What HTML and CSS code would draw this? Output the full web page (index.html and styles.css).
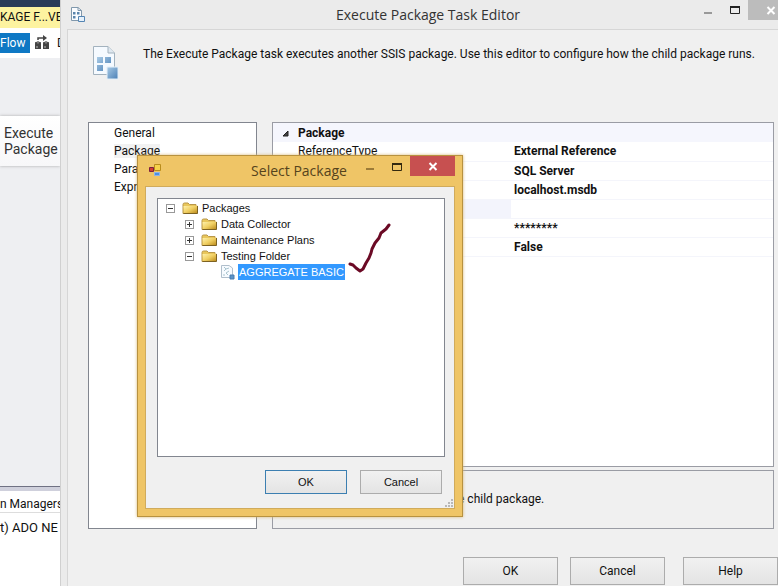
FILE: index.html
```html
<!DOCTYPE html>
<html lang="en">
<head>
    <meta charset="UTF-8">
    <meta name="viewport" content="width=device-width, initial-scale=1.0">
    <title>Execute Package Task Editor</title>
    <link rel="stylesheet" href="styles.css">
</head>
<body>
    <svg class="defs" width="0" height="0" aria-hidden="true">
        <defs>
            <linearGradient id="folderFill" x1="0" y1="0" x2="1" y2="1">
                <stop offset="0" stop-color="#fff3b0"/>
                <stop offset="0.5" stop-color="#f0cf62"/>
                <stop offset="1" stop-color="#b88718"/>
            </linearGradient>
            <linearGradient id="blueFill" x1="0" y1="0" x2="1" y2="1">
                <stop offset="0" stop-color="#a9cbe6"/>
                <stop offset="1" stop-color="#4a7fb5"/>
            </linearGradient>
        </defs>
        <symbol id="folder" viewBox="0 0 16 14">
            <path d="M1 3.500 Q1 2 2.500 2 H6 L7.500 3.500 H14 V12.500 H1 Z" fill="#e9c75c" stroke="#b99748"/>
            <path d="M1.500 5 H12 L15.500 4.500 V12.500 H2 Z" fill="url(#folderFill)"/>
            <path d="M1.500 12.500 H15.500 V5" fill="none" stroke="#7d6222"/>
        </symbol>
    </svg>

    <div class="ide">
        <div class="ide-top"></div>
        <div class="ide-tab">KAGE F...VE</div>
        <div class="ide-toolbar">
            <button class="flow">Flow</button>
            <svg width="16" height="16" viewBox="0 0 16 16" aria-hidden="true">
                <path d="M4 5 V3 H10" fill="none" stroke="#444" stroke-width="1.500"/>
                <path d="M9 0 L13 3 L9 6 Z" fill="#444"/>
                <path d="M1 8 H7 V14 H1 Z M9 8 H15 V14 H9 Z" fill="#444"/>
                <path d="M1 8 Q4 5.500 7 8 Q4 10 1 8 M9 8 Q12 5.500 15 8 Q12 10 9 8" fill="#aaa" stroke="#444"/>
                <path d="M3 11 V13 M11 11 V13" stroke="#bbb"/>
            </svg>
            <span class="next-tab">D</span>
        </div>
        <div class="ide-canvas">
            <div class="task">Execute<br>Package</div>
        </div>
        <div class="managers-title">n Managers</div>
        <div class="managers">t) ADO NE</div>
    </div>

    <div class="editor">
        <div class="titlebar">
            <svg class="app-icon" width="16" height="16" viewBox="0 0 16 16" aria-hidden="true">
                <path d="M1.500 1.500 H8 L11.500 4.500 V14.500 H1.500 Z" fill="#fafcff" stroke="#8098ac"/>
                <path d="M8 1.500 V4.500 H11.500" fill="none" stroke="#8098ac"/>
                <path d="M3 6 H5.500 V8.500 H3 Z M7 6 H9.500 V8.500 H7 Z M3 10 H5.500 V12.500 H3 Z" fill="#5b86ad"/>
                <path d="M8.500 10.500 H14.500 V15.500 H8.500 Z" fill="#e6f1fb" stroke="#5585b3"/>
            </svg>
            <h1>Execute Package Task Editor</h1>
            <div class="window-buttons">
                <button class="minimize" aria-label="Minimize"><svg width="10" height="20"><path d="M1 13 H9" stroke="#999" stroke-width="2"/></svg></button>
                <button class="maximize" aria-label="Maximize"><svg width="10" height="20"><path d="M0.500 6 V13.500 H9.500 V6" fill="none" stroke="#222"/><path d="M0 7 H10" stroke="#222" stroke-width="2"/></svg></button>
                <button class="close" aria-label="Close"><svg width="10" height="20"><path d="M1.500 7 L8.500 14 M8.500 7 L1.500 14" stroke="#fff" stroke-width="2"/></svg></button>
            </div>
        </div>
        <div class="client">
            <div class="intro">
                <svg width="28" height="36" viewBox="0 0 28 36" aria-hidden="true">
                    <path d="M1.500 1.500 H16 L22.500 8 V29.500 H1.500 Z" fill="#f5faff" stroke="#a3b2be"/>
                    <path d="M16 1.500 V8 H22.500" fill="#dfe8f0" stroke="#a3b2be"/>
                    <path d="M5 12 H11 V18 H5 Z M13 12 H19 V18 H13 Z M5 20 H11 V26 H5 Z" fill="url(#blueFill)"/>
                    <path d="M15 22 H26 V34 H15 Z" fill="url(#blueFill)" stroke="#e3eff9"/>
                </svg>
                <p>The Execute Package task executes another SSIS package. Use this editor to configure how the child package runs.</p>
            </div>
            <div class="panels">
                <ul class="pages">
                    <li>General</li>
                    <li><span class="current">Package</span></li>
                    <li>Parameters</li>
                    <li>Expressions</li>
                </ul>
                <div class="details">
                    <div class="property-grid">
                        <table>
                            <colgroup>
                                <col class="names">
                                <col>
                            </colgroup>
                            <thead>
                                <tr>
                                    <th colspan="2"><svg width="7" height="7" aria-hidden="true"><path d="M6 1 V6 H1 Z" fill="#444" stroke="#222"/></svg>Package</th>
                                </tr>
                            </thead>
                            <tbody>
                                <tr><td>ReferenceType</td><td>External Reference</td></tr>
                                <tr><td></td><td>SQL Server</td></tr>
                                <tr><td></td><td>localhost.msdb</td></tr>
                                <tr class="selected"><td></td><td></td></tr>
                                <tr><td></td><td>********</td></tr>
                                <tr><td></td><td>False</td></tr>
                            </tbody>
                        </table>
                    </div>
                    <div class="description">Specifies the name of the child package.</div>
                </div>
            </div>
            <div class="actions">
                <button>OK</button>
                <button>Cancel</button>
                <button class="help">Help</button>
            </div>
        </div>
    </div>

    <div class="dialog" role="dialog" aria-labelledby="dialogTitle">
        <div class="dialog-title">
            <svg class="form-icon" width="14" height="14" viewBox="0 0 14 14" aria-hidden="true">
                <path d="M6.500 1.500 H12.500 V7.500 H6.500 Z" fill="#f7d34c" stroke="#b98c1c"/>
                <path d="M1.500 4.500 H5.500 V8.500 H1.500 Z" fill="#d04030" stroke="#7d2040"/>
                <path d="M6.500 9.500 H11.500 V12.500 H6.500 Z" fill="#4d8fe0" stroke="#8fb4e8"/>
            </svg>
            <h2 id="dialogTitle">Select Package</h2>
            <div class="dialog-buttons">
                <button class="minimize" aria-label="Minimize"><svg width="10" height="20"><path d="M1 13 H9" stroke="#9c7b37" stroke-width="2"/></svg></button>
                <button class="maximize" aria-label="Maximize"><svg width="10" height="20"><path d="M0.500 7 V14.500 H9.500 V7" fill="none" stroke="#33290f"/><path d="M0 8 H10" stroke="#33290f" stroke-width="2"/></svg></button>
                <button class="close" aria-label="Close"><svg width="10" height="20"><path d="M1.500 7 L8.500 14 M8.500 7 L1.500 14" stroke="#fff" stroke-width="2"/></svg></button>
            </div>
        </div>
        <div class="dialog-client">
            <ul class="tree">
                <li>
                    <div class="node"><button class="expander" aria-label="Collapse"><svg width="9" height="9"><path d="M2 4.500 H7" stroke="#333"/></svg></button><svg width="16" height="14"><use href="#folder"/></svg><span>Packages</span></div>
                    <ul>
                        <li><div class="node"><button class="expander" aria-label="Expand"><svg width="9" height="9"><path d="M2 4.500 H7 M4.500 2 V7" stroke="#333"/></svg></button><svg width="16" height="14"><use href="#folder"/></svg><span>Data Collector</span></div></li>
                        <li><div class="node"><button class="expander" aria-label="Expand"><svg width="9" height="9"><path d="M2 4.500 H7 M4.500 2 V7" stroke="#333"/></svg></button><svg width="16" height="14"><use href="#folder"/></svg><span>Maintenance Plans</span></div></li>
                        <li>
                            <div class="node"><button class="expander" aria-label="Collapse"><svg width="9" height="9"><path d="M2 4.500 H7" stroke="#333"/></svg></button><svg width="16" height="14"><use href="#folder"/></svg><span>Testing Folder</span></div>
                            <ul>
                                <li><div class="node leaf">
                                    <svg width="16" height="16" viewBox="0 0 16 16" aria-hidden="true">
                                        <path d="M1.500 1.500 H9 L12.500 4 V13.500 H1.500 Z" fill="#f7fbff" stroke="#b0bfcc"/>
                                        <path d="M4 3 L6 5 L4 7 M6 5 L9 4 M9 7 L6 9 L8 11 M4 10 V12" fill="none" stroke="#a9c4cf"/>
                                        <path d="M10 11 H14 V15 H10 Z" fill="#5d95c9" stroke="#4a7dae"/>
                                    </svg><span class="picked">AGGREGATE BASIC</span></div></li>
                            </ul>
                        </li>
                    </ul>
                </li>
            </ul>
            <div class="dialog-actions">
                <button class="default">OK</button>
                <button>Cancel</button>
            </div>
        </div>
        <svg class="grip" width="9" height="9" aria-hidden="true">
            <path d="M6 0 H8 V2 H6 Z M3 3 H5 V5 H3 Z M6 3 H8 V5 H6 Z M0 6 H2 V8 H0 Z M3 6 H5 V8 H3 Z M6 6 H8 V8 H6 Z" fill="#b8b8b8"/>
        </svg>
        <svg class="check" width="44" height="52" viewBox="0 0 44 52" aria-hidden="true">
            <path d="M2 41 L5 42 L8 45 L12 48 L15 46 L18 40 L21 35 L23 30 L24 26 L27 20 L31 15 L33 10 L38 6 L41 2" fill="none" stroke="#6b0a25" stroke-width="3" stroke-linecap="round" stroke-linejoin="round"/>
        </svg>
    </div>
</body>
</html>
```

FILE: styles.css
```css
* {
    box-sizing: border-box;
}
body {
    margin: 0;
    height: 100vh;
    display: flex;
    overflow: hidden;
    position: relative;
    background: #ebebeb;
    color: #111;
    font-family: Roboto, "Open Sans", sans-serif;
    font-size: 12px;
}
button {
    padding: 0;
    border: 1px solid #acacac;
    background: linear-gradient(#f1f1f1, #e4e4e4);
    color: #111;
    font: inherit;
}
h1, h2, p, ul {
    margin: 0;
    padding: 0;
    font-weight: normal;
    list-style: none;
}
svg {
    display: block;
    flex: none;
}
.defs {
    position: absolute;
}

/* Designer behind the editor */
.ide {
    flex: none;
    width: 61px;
    display: flex;
    flex-direction: column;
    overflow: hidden;
    white-space: nowrap;
    background: #eeeff2;
    border-right: 1px solid #d0d0d0;
}
.ide-top {
    height: 7px;
    background: #2b3c58;
}
.ide-tab {
    height: 21px;
    line-height: 21px;
    background: #fdf3a0;
}
.ide-toolbar {
    height: 30px;
    display: flex;
    align-items: center;
    gap: 4px;
    background: #fff;
}
.flow {
    flex: none;
    width: 30px;
    height: 20px;
    border: none;
    background: #0e78c4;
    color: #fff;
    text-align: left;
}
.next-tab {
    padding-left: 3px;
}
.ide-canvas {
    flex: 1;
    padding-top: 58px;
    border-bottom: 1px solid #6f7183;
}
.task {
    padding: 9px 0 9px 4px;
    background: linear-gradient(#fff, #f7f7f9);
    box-shadow: 0 0 3px #aaa;
    color: #333;
    font-size: 14px;
    line-height: 16px;
}
.managers-title {
    height: 26px;
    padding-top: 3px;
    border-top: 4px solid #cfd0dc;
    border-bottom: 1px solid #ddd;
    background: #fff;
    line-height: 20px;
}
.managers {
    height: 73px;
    padding-top: 5px;
    background: #fff;
    font-size: 13px;
    line-height: 20px;
}

/* Task editor window */
.editor {
    flex: 1;
    min-width: 0;
    display: flex;
    flex-direction: column;
    padding-left: 6px;
}
.titlebar {
    height: 29px;
    display: flex;
    align-items: flex-start;
    padding-left: 3px;
}
.app-icon {
    margin-top: 6px;
}
.titlebar h1 {
    flex: 1;
    padding-left: 76px;
    font-family: "Open Sans", sans-serif;
    font-size: 14px;
    line-height: 30px;
    text-align: center;
    color: #333;
}
.window-buttons, .dialog-buttons {
    display: flex;
}
.window-buttons button, .dialog-buttons button {
    height: 20px;
    display: flex;
    justify-content: center;
    border: none;
    background: none;
}
.window-buttons .minimize, .window-buttons .maximize {
    width: 27px;
}
.window-buttons .close {
    width: 30px;
    padding-left: 16px;
    background: #bcbcbc;
}
.client {
    flex: 1;
    display: flex;
    flex-direction: column;
    border-top: 1px solid #d6d6d6;
    border-left: 1px solid #d6d6d6;
    background: #f0f0f0;
}
.intro {
    height: 92px;
    display: flex;
    gap: 23px;
    padding: 15px 0 0 24px;
}
.intro p {
    line-height: 18px;
    white-space: nowrap;
}
.panels {
    flex: 1;
    min-height: 0;
    display: flex;
    gap: 15px;
    padding: 0 4px 0 20px;
}
.pages {
    width: 169px;
    padding: 1px 0 0 25px;
    border: 1px solid #82868f;
    background: #fff;
    line-height: 18px;
}
.current {
    background: #f2f2f2;
}
.details {
    flex: 1;
    display: flex;
    flex-direction: column;
    gap: 3px;
}
.property-grid {
    flex: 1;
    border: 1px solid #9a9ca4;
    background: #fff;
}
.property-grid table {
    width: 100%;
    border-collapse: collapse;
    table-layout: fixed;
}
.names {
    width: 238px;
}
.property-grid th {
    height: 19px;
    padding: 0 0 0 9px;
    background: #f5f6fd;
    text-align: left;
}
.property-grid th svg {
    display: inline-block;
    margin-right: 9px;
}
.property-grid td {
    height: 19px;
    padding: 0 0 0 3px;
    border-bottom: 1px solid #f4f5fb;
    line-height: 18px;
    font-weight: bold;
}
.property-grid td:first-child {
    padding-left: 25px;
    font-weight: normal;
}
.property-grid .selected td:first-child {
    background: #f3f4fc;
}
.description {
    height: 59px;
    padding-left: 56px;
    border: 1px solid #9a9ca4;
    line-height: 57px;
}
.actions {
    display: flex;
    justify-content: flex-end;
    gap: 12px;
    padding: 28px 0 1px;
}
.actions button {
    width: 95px;
    height: 28px;
}
.actions .help {
    margin-left: 6px;
}

/* Select Package dialog */
.dialog {
    position: absolute;
    left: 137px;
    top: 155px;
    width: 326px;
    height: 362px;
    display: flex;
    flex-direction: column;
    padding: 0 7px 7px;
    border: 1px solid #b8923f;
    background: #efc566;
    box-shadow: 0 0 3px #d8b878;
}
.dialog-title {
    height: 30px;
    display: flex;
    align-items: flex-start;
    padding-left: 3px;
}
.form-icon {
    margin-top: 7px;
}
.dialog-title h2 {
    flex: 1;
    padding-left: 80px;
    font-family: "Open Sans", sans-serif;
    font-size: 14px;
    line-height: 30px;
    text-align: center;
    white-space: nowrap;
    color: #55431c;
}
.dialog-buttons .minimize, .dialog-buttons .maximize {
    width: 27px;
}
.dialog-buttons .close {
    width: 45px;
    background: #c75050;
}
.dialog-client {
    flex: 1;
    display: flex;
    flex-direction: column;
    gap: 13px;
    padding: 11px 9px 14px 11px;
    border: 1px solid #d0ab5c;
    background: #f0f0f0;
    font-family: "Liberation Sans", Arial, sans-serif;
    font-size: 11px;
}
.tree {
    flex: 1;
    padding: 1px 0 0 8px;
    border: 1px solid #82868f;
    background: #fff;
}
.tree ul {
    padding-left: 19px;
}
.node {
    height: 16px;
    display: flex;
    align-items: center;
    line-height: 16px;
    white-space: nowrap;
}
.node span {
    padding: 0 1px;
    margin-left: 3px;
}
.expander {
    width: 9px;
    height: 9px;
    margin-right: 7px;
    display: flex;
    align-items: center;
    justify-content: center;
    border-color: #999;
    background: #fff;
}
.leaf {
    padding-left: 16px;
}
.leaf .picked {
    margin-left: 2px;
    background: #3399ff;
    color: #fff;
}
.dialog-actions {
    display: flex;
    justify-content: flex-end;
    gap: 13px;
    padding-right: 3px;
}
.dialog-actions button {
    width: 82px;
    height: 24px;
}
.dialog-actions .default {
    border-color: #3c7fb1;
}
.grip {
    position: absolute;
    right: 8px;
    bottom: 8px;
}
.check {
    position: absolute;
    left: 210px;
    top: 67px;
}
```
